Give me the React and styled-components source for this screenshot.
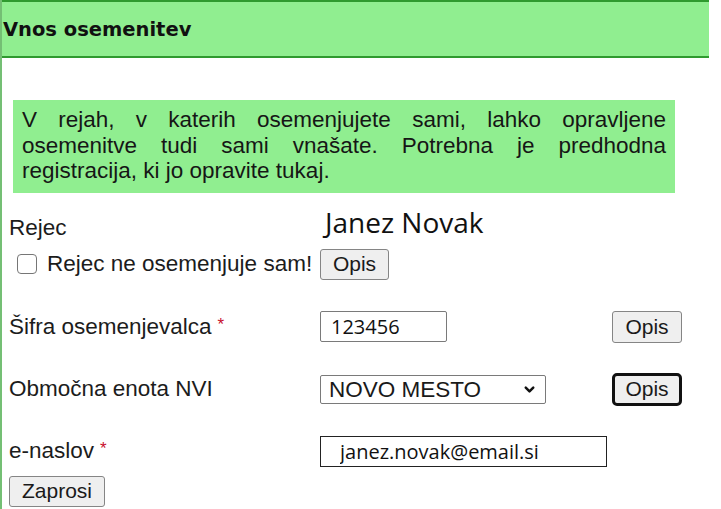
import React, { useState } from "react";
import styled, { createGlobalStyle } from "styled-components";
import { ChevronDown } from "lucide-react";

const GlobalStyle = createGlobalStyle`
  html, body {
    margin: 0;
    padding: 0;
    background: #ffffff;
  }
  body {
    font-family: "Liberation Sans", Arial, sans-serif;
    color: #1c1c1c;
  }
`;

const Page = styled.div`
  min-height: 509px;
  border-left: 2px solid #74bf74;
  box-sizing: border-box;
`;

const Header = styled.div`
  width: 706px;
  height: 54px;
  background: #90ee90;
  border-top: 2px solid #2f9a2f;
  border-bottom: 2px solid #2f9a2f;
  display: flex;
  align-items: center;
  padding-left: 1px;
  font-family: "DejaVu Sans", Verdana, sans-serif;
  font-weight: bold;
  font-size: 19.5px;
  color: #111;
`;

const InfoBox = styled.div`
  margin: 42px 0 0 11px;
  width: 644px;
  padding: 7px 9px 9px 9px;
  background: #90ee90;
  font-size: 22.5px;
  line-height: 25.5px;
  text-align: justify;
  color: #161616;
`;

const Form = styled.div`
  padding-left: 7px;
`;

const Row = styled.div`
  display: grid;
  grid-template-columns: 311px 292px auto;
  align-items: ${(p) => p.align || "center"};
  height: ${(p) => p.h}px;
  margin-top: ${(p) => p.mt}px;
`;

const Label = styled.span`
  font-size: 22.5px;
  color: #1c1c1c;
  padding-top: ${(p) => p.pt || 0}px;
`;

const Star = styled.span`
  color: #c8102e;
  font-size: 17px;
  margin-left: 6px;
  vertical-align: 4px;
`;

const Name = styled.span`
  font-family: "Open Sans", "Noto Sans", sans-serif;
  font-size: 28px;
  color: #111;
  padding-left: 5px;
`;

const CheckWrap = styled.label`
  display: flex;
  align-items: center;
  padding-left: 8px;
  font-size: 22.5px;
`;

const Check = styled.input`
  appearance: none;
  margin: 0 10px 0 0;
  width: 20px;
  height: 20px;
  border: 1.5px solid #767676;
  border-radius: 4px;
  background: #fff;
  box-sizing: border-box;
`;

const Button = styled.button`
  justify-self: start;
  font-family: "Liberation Sans", Arial, sans-serif;
  font-size: 21px;
  color: #1a1a1a;
  background: #efefef;
  border: ${(p) => (p.focused ? "3px solid #111" : "1.5px solid #858585")};
  border-radius: ${(p) => (p.focused ? "5px" : "3px")};
  height: ${(p) => p.h || 31}px;
  width: ${(p) => p.w || 69}px;
  padding: 0;
  box-sizing: border-box;
  cursor: pointer;
`;

const TextInput = styled.input`
  box-sizing: border-box;
  width: ${(p) => p.w}px;
  height: 31px;
  border: 1.5px solid ${(p) => (p.dark ? "#222" : "#7a7a7a")};
  border-radius: ${(p) => (p.dark ? "0" : "2px")};
  padding: 0 0 0 ${(p) => p.pl}px;
  font-family: "Open Sans", "Noto Sans", sans-serif;
  font-size: 20px;
  color: #111;
  outline: none;
`;

const SelectWrap = styled.div`
  position: relative;
  width: 226px;
  height: 29px;
`;

const Select = styled.select`
  appearance: none;
  box-sizing: border-box;
  width: 100%;
  height: 100%;
  border: 1.5px solid #7a7a7a;
  border-radius: 2px;
  background: #fff;
  padding: 0 0 0 8px;
  font-family: "Liberation Sans", Arial, sans-serif;
  font-size: 22.5px;
  color: #1a1a1a;
  outline: none;
`;

const Chevron = styled(ChevronDown)`
  position: absolute;
  right: 9px;
  top: 7px;
  pointer-events: none;
`;

export default function App() {
  const [selfBreeding, setSelfBreeding] = useState(false);

  return (
    <>
      <GlobalStyle />
      <Page>
        <Header>Vnos osemenitev</Header>
        <InfoBox>
          V rejah, v katerih osemenjujete sami, lahko opravljene osemenitve
          tudi sami vnašate. Potrebna je predhodna registracija, ki jo
          opravite tukaj.
        </InfoBox>
        <Form>
          <Row h={42} mt={10} align="start">
            <Label pt={12}>Rejec</Label>
            <Name>Janez Novak</Name>
          </Row>
          <Row h={31} mt={4}>
            <CheckWrap>
              <Check
                type="checkbox"
                checked={selfBreeding}
                onChange={(e) => setSelfBreeding(e.target.checked)}
              />
              Rejec ne osemenjuje sam!
            </CheckWrap>
            <Button>Opis</Button>
          </Row>
          <Row h={32} mt={31}>
            <Label>
              Šifra osemenjevalca<Star>*</Star>
            </Label>
            <TextInput w={127} pl={10} defaultValue="123456" />
            <Button w={70} h={32}>
              Opis
            </Button>
          </Row>
          <Row h={33} mt={30}>
            <Label>Območna enota NVI</Label>
            <SelectWrap>
              <Select defaultValue="NM">
                <option value="NM">NOVO MESTO</option>
                <option value="LJ">LJUBLJANA</option>
                <option value="MB">MARIBOR</option>
              </Select>
              <Chevron size={15} strokeWidth={4} color="#111" />
            </SelectWrap>
            <Button w={70} h={33} focused>
              Opis
            </Button>
          </Row>
          <Row h={31} mt={30}>
            <Label>
              e-naslov<Star>*</Star>
            </Label>
            <TextInput w={287} pl={19} dark defaultValue="janez.novak@email.si" />
          </Row>
          <Row h={31} mt={9}>
            <Button w={96}>Zaprosi</Button>
          </Row>
        </Form>
      </Page>
    </>
  );
}
